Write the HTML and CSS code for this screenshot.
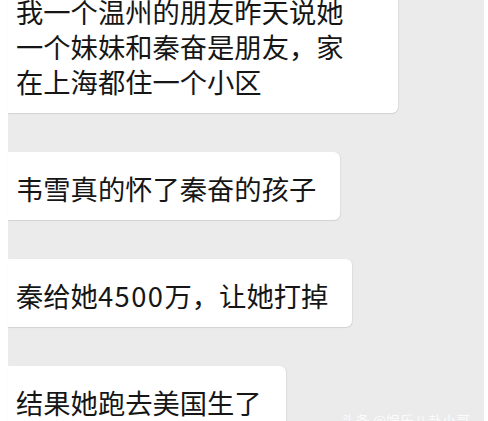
FILE: index.html
```html
<!DOCTYPE html>
<html lang="zh-CN">
<head>
<meta charset="utf-8">
<title>聊天记录</title>
<link rel="stylesheet" href="styles.css">
</head>
<body>
<div class="screen">
  <div class="chat">
    <div class="bubble bubble--wide">我一个温州的朋友昨天说她一个妹妹和秦奋是朋友，家在上海都住一个小区</div>
    <div class="bubble">韦雪真的怀了秦奋的孩子</div>
    <div class="bubble">秦给她<span class="num">4500</span>万，让她打掉</div>
    <div class="bubble">结果她跑去美国生了</div>
  </div>
  <div class="watermark">头条 @娱乐八卦小哥</div>
</div>
</body>
</html>
```
FILE: styles.css
```css
* { box-sizing: border-box; }
html, body {
  margin: 0;
  padding: 0;
  background: #ffffff;
}
.screen {
  position: relative;
  width: 488px;
  height: 421px;
  overflow: hidden;
  padding: 0 4px 0 8px;
  background: #ffffff;
}
.chat {
  background: #ebebeb;
  display: flex;
  flex-direction: column;
  align-items: flex-start;
  gap: 39px;
  margin-top: -25px;
  height: 470px;
}
.bubble {
  width: fit-content;
  background: #ffffff;
  border-radius: 0 6px 6px 0;
  box-shadow: 0 1px 1px rgba(0, 0, 0, 0.10), 1px 0 1px rgba(0, 0, 0, 0.05);
  padding: 19px 24px 14px 8px;
  font-family: "Noto Sans CJK SC", "Noto Sans", sans-serif;
  font-size: 27.3px;
  line-height: 35px;
  color: #161616;
  flex-shrink: 0;
}
.bubble--wide {
  width: 390px;
  padding-right: 48px;
}
.num {
  letter-spacing: 1.5px;
}
.watermark {
  position: absolute;
  right: 18px;
  bottom: -9px;
  font-family: "Noto Sans CJK SC", sans-serif;
  font-size: 14px;
  color: rgba(255, 255, 255, 0.85);
}
```
